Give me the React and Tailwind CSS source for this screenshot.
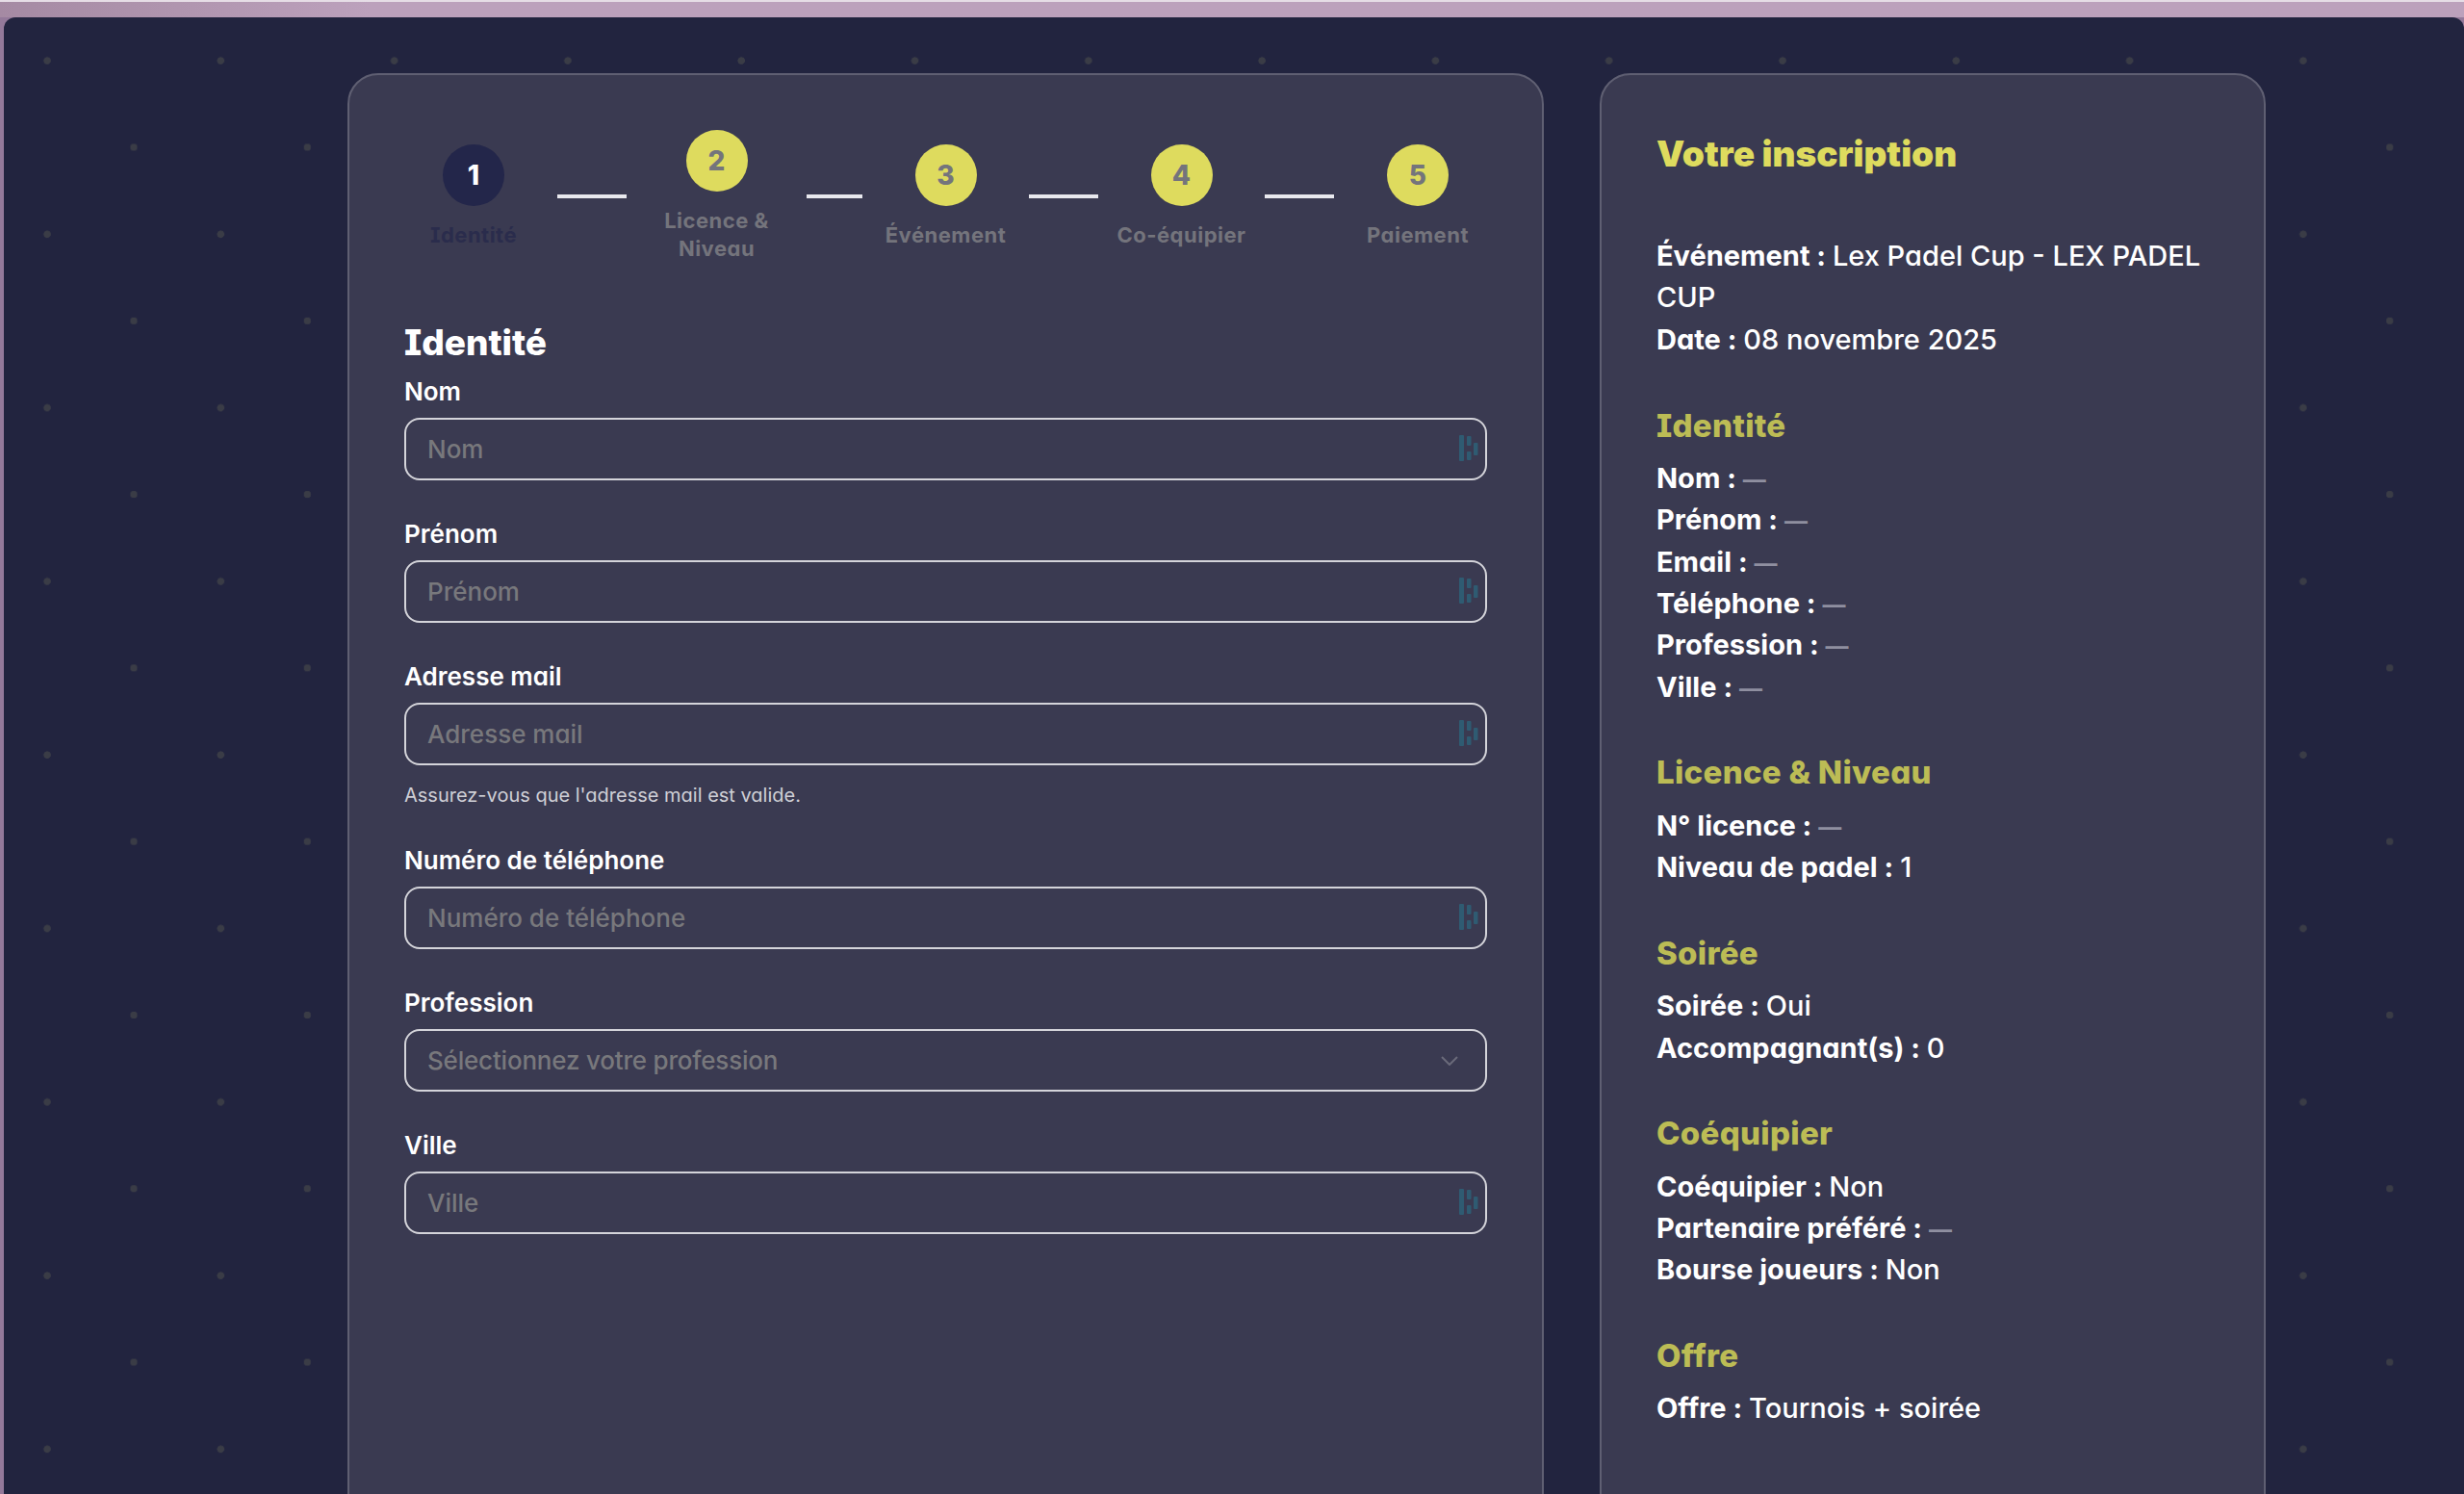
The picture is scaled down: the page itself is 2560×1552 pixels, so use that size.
import React from 'react'

const steps = [
  { n: 1, label: 'Identité', w: 'w-[144px]', active: true },
  { n: 2, label: 'Licence & Niveau', w: 'w-[157px]', line: 'w-[72px]' },
  { n: 3, label: 'Événement', w: 'w-[143px]', line: 'w-[58px]' },
  { n: 4, label: 'Co-équipier', w: 'w-[143px]', line: 'w-[72px]' },
  { n: 5, label: 'Paiement', w: 'w-[144px]', line: 'w-[72px]' },
]

const sections = [
  { title: 'Identité', rows: [['Nom', '—'], ['Prénom', '—'], ['Email', '—'], ['Téléphone', '—'], ['Profession', '—'], ['Ville', '—']] },
  { title: 'Licence & Niveau', rows: [['N° licence', '—'], ['Niveau de padel', '1']] },
  { title: 'Soirée', rows: [['Soirée', 'Oui'], ['Accompagnant(s)', '0']] },
  { title: 'Coéquipier', rows: [['Coéquipier', 'Non'], ['Partenaire préféré', '—'], ['Bourse joueurs', 'Non']] },
  { title: 'Offre', rows: [['Offre', 'Tournois + soirée']] },
]

function FillIcon() {
  return (
    <svg className="absolute right-[9px] top-[17px] opacity-70" width="20" height="28" viewBox="0 0 20 28" fill="#2b6a80">
      <rect x="0" y="1" width="5" height="27" rx="1" />
      <rect x="8" y="2" width="4.5" height="10" rx="1" />
      <rect x="8" y="18" width="4.5" height="9" rx="1" />
      <rect x="15" y="9" width="4.5" height="13" rx="1" />
    </svg>
  )
}

function Field({ label, help }) {
  return (
    <div className="mb-[40px]">
      <label className="block h-[35px] text-[26px] leading-[32px] font-semibold text-white">{label}</label>
      <div className="relative mt-[8px]">
        <input
          placeholder={label}
          className="block w-full h-[65px] rounded-2xl border-2 border-[#d4d4da] bg-transparent px-[22px] text-[26px] font-medium text-white outline-none placeholder:text-[#78787c]"
        />
        <FillIcon />
      </div>
      {help && <p className="mt-[17px] mb-[-2px] text-[20px] leading-[28px] text-[#cfcfd6]">{help}</p>}
    </div>
  )
}

function Stepper() {
  return (
    <div className="flex items-center">
      {steps.map((s) => (
        <React.Fragment key={s.n}>
          {s.line && <div className={'mx-[15px] h-[4px] shrink-0 bg-[#e8e8ee] ' + s.line} />}
          <div className={'flex shrink-0 flex-col items-center ' + s.w}>
            <div className={s.active
              ? 'flex h-[64px] w-[64px] items-center justify-center rounded-full bg-[#23264a] text-[28px] font-extrabold text-white'
              : 'flex h-[64px] w-[64px] items-center justify-center rounded-full bg-[#dedb5e] text-[28px] font-extrabold text-[#74747c]'}>
              {s.n}
            </div>
            <div className={s.active
              ? 'mt-[16px] text-center text-[22px] leading-[29px] font-bold tracking-[0.5px] text-[#2a2c4c]'
              : 'mt-[16px] text-center text-[22px] leading-[29px] font-bold tracking-[0.5px] text-[#74747c]'}>
              {s.label}
            </div>
          </div>
        </React.Fragment>
      ))}
    </div>
  )
}

function Row({ name, value }) {
  return (
    <div className="h-[43.4px]">
      <span className="font-bold">{name} : </span>
      <span className={value === '—' ? 'text-[24px] leading-none font-bold text-[#8f8fa0]' : ''}>{value}</span>
    </div>
  )
}

export default function App() {
  return (
    <div className="h-[1552px] w-[2560px] overflow-hidden bg-[#94799a] font-[Inter,sans-serif] [font-feature-settings:'cv11','cv08']">
      <div className="h-[18px] border-t-2 border-[#e6dde6] bg-gradient-to-r from-[#a58aa3] via-[#bca1bc] via-15% to-[#bca1bc]" />
      <div className="ml-[4px] h-[1534px] overflow-hidden rounded-t-xl bg-[#22243f] bg-[radial-gradient(circle_at_45px_45px,#3a3c46_3.5px,transparent_4px),radial-gradient(circle_at_135px_135px,#3a3c46_3.5px,transparent_4px)] bg-[length:180.3px_180.3px] pt-[58px] pl-[357px]">
        <div className="flex gap-[58px]">
          <div className="h-[1600px] w-[1243px] shrink-0 rounded-[32px] border-2 border-[#5f5f72] bg-[#3a3a51] p-[57px]">
            <Stepper />
            <h2 className="mt-[61px] mb-[13px] text-[37px] leading-[44px] font-extrabold text-white">Identité</h2>
            <Field label="Nom" />
            <Field label="Prénom" />
            <Field label="Adresse mail" help="Assurez-vous que l'adresse mail est valide." />
            <Field label="Numéro de téléphone" />
            <div className="mb-[40px]">
              <label className="block h-[35px] text-[26px] leading-[32px] font-semibold text-white">Profession</label>
              <div className="relative mt-[8px] flex h-[65px] items-center rounded-2xl border-2 border-[#d4d4da] px-[22px] text-[26px] font-medium tracking-[-0.2px] text-[#78787c]">
                Sélectionnez votre profession
                <svg className="absolute right-[28px] top-[26px]" width="18" height="10" viewBox="0 0 18 10" fill="none" stroke="#6a6a7a" strokeWidth="2">
                  <path d="M1 1l8 8 8-8" />
                </svg>
              </div>
            </div>
            <Field label="Ville" />
          </div>

          <div className="h-[1600px] w-[692px] shrink-0 rounded-[32px] border-2 border-[#5f5f72] bg-[#3a3a51] px-[57px] pt-[57px] text-[29px] leading-[43.4px] font-medium text-white">
            <h2 className="text-[37px] leading-[50px] font-black text-[#dedb5e]">Votre inscription</h2>
            <div className="mt-[59px]">
              <div><span className="font-bold">Événement : </span><span>Lex Padel Cup - LEX PADEL CUP</span></div>
              <div><span className="font-bold">Date : </span><span>08 novembre 2025</span></div>
            </div>
            {sections.map((sec) => (
              <div key={sec.title} className="mt-[46.3px]">
                <h3 className="mb-[12.3px] text-[33px] leading-[42px] font-extrabold tracking-[0.3px] text-[#bcbc55]">{sec.title}</h3>
                {sec.rows.map((r) => <Row key={r[0]} name={r[0]} value={r[1]} />)}
              </div>
            ))}
          </div>
        </div>
      </div>
    </div>
  )
}
